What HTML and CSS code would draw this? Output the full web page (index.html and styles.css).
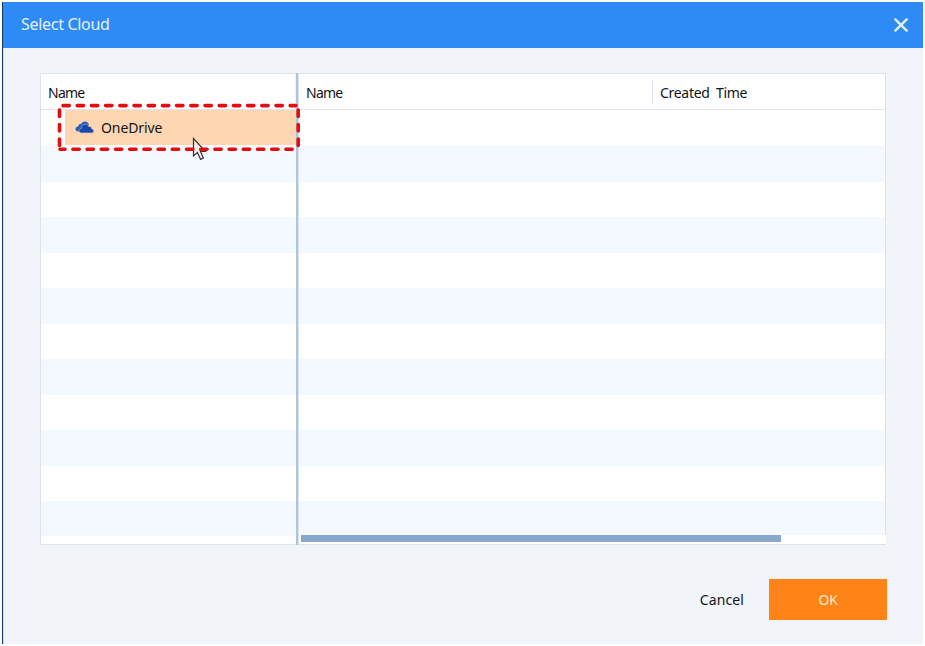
FILE: index.html
```
<!DOCTYPE html>
<html lang="en">

<head>
    <meta charset="UTF-8">
    <meta name="viewport" content="width=device-width, initial-scale=1.0">
    <title>Select Cloud</title>
    <link rel="stylesheet" href="styles.css">
</head>

<body>
    <div class="dialog">
        <div class="titlebar">
            <span class="title">Select Cloud</span>
            <button class="closeBtn" aria-label="Close">
                <svg width="16" height="16" viewBox="0 0 16 16">
                    <path d="M2.3 2.3 L13.7 13.7 M13.7 2.3 L2.3 13.7" />
                </svg>
            </button>
        </div>

        <div class="content">
            <div class="browser">
                <div class="pane tree">
                    <div class="head">
                        <span class="col">Name</span>
                    </div>
                    <div class="rows">
                        <div class="row first">
                            <div class="item">
                                <svg class="cloud" width="19" height="13" viewBox="0 0 19 13">
                                    <path class="back" d="M3.4 10.4 C1.4 10.4 0.5 9.4 0.5 8 C0.5 6.6 1.6 5.7 3.1 5.6 C3.3 3.7 4.6 2.7 6.3 2.7 C7.2 1.3 8.5 0.6 10 0.6 C12.1 0.6 13.5 1.9 14 3.8 L8 7 L5 10.4 Z" />
                                    <path class="front" d="M6.6 11.9 C5 11.9 4.1 11.1 4.1 9.8 C4.1 8.6 5 7.7 6.3 7.5 C6.5 4.9 8.1 3.2 10.3 3.2 C12 3.2 13.3 4.1 13.9 5.6 C15.6 5.3 16.7 6.4 16.8 8 C18.1 8.3 18.7 9.1 18.7 10.1 C18.7 11.2 17.9 11.9 16.8 11.9 Z" />
                                </svg>
                                <span class="label">OneDrive</span>
                            </div>
                        </div>
                        <div class="row"></div>
                        <div class="row"></div>
                        <div class="row"></div>
                        <div class="row"></div>
                        <div class="row"></div>
                        <div class="row"></div>
                        <div class="row"></div>
                        <div class="row"></div>
                        <div class="row"></div>
                        <div class="row"></div>
                        <div class="row"></div>
                    </div>
                </div>
                <div class="splitter"></div>
                <div class="pane files">
                    <div class="head">
                        <span class="col name">Name</span>
                        <span class="col created">Created Time</span>
                    </div>
                    <div class="rows">
                        <div class="row first"></div>
                        <div class="row"></div>
                        <div class="row"></div>
                        <div class="row"></div>
                        <div class="row"></div>
                        <div class="row"></div>
                        <div class="row"></div>
                        <div class="row"></div>
                        <div class="row"></div>
                        <div class="row"></div>
                        <div class="row"></div>
                        <div class="row"></div>
                    </div>
                    <div class="scroll">
                        <div class="thumb"></div>
                    </div>
                </div>

                <!-- mouse pointer -->
                <svg class="cursor" width="16" height="25" viewBox="0 0 16 25">
                    <path d="M1.5 1.5 V19 L5.4 15.5 L8.6 22.4 L11.4 21 L8.4 14.3 H13.4 Z" />
                </svg>

                <!-- dashed highlight around the selected drive -->
                <svg class="highlight" width="246" height="52" viewBox="0 0 246 52">
                    <path d="M9 5.6 H242" stroke-dasharray="6.3 7.9" />
                    <path d="M6 49.2 H242" stroke-dasharray="6.3 7.9" stroke-dashoffset="1.3" />
                    <path d="M5.5 10 V47" stroke-dasharray="6.4 8.1" />
                    <path d="M244.2 10 V47" stroke-dasharray="6.4 8.1" />
                </svg>
            </div>

            <div class="actions">
                <button class="cancelBtn">Cancel</button>
                <button class="okBtn">OK</button>
            </div>
        </div>
    </div>
</body>

</html>
```
FILE: styles.css
```
* {
    margin: 0;
    padding: 0;
    box-sizing: border-box;
}

body {
    width: 925px;
    height: 646px;
    padding: 2px;
    overflow: hidden;
    background-color: #ffffff;
    font-family: "Noto Sans", "Open Sans", sans-serif;
    font-size: 14px;
    color: #111318;
}

button {
    border: none;
    background: none;
    font: inherit;
    color: inherit;
    cursor: pointer;
}

.dialog {
    display: flex;
    flex-direction: column;
    height: 642px;
    background-color: #f1f5fa;
    border-left: 1px solid #153a63;
}

.titlebar {
    display: flex;
    flex: 0 0 46px;
    align-items: center;
    justify-content: space-between;
    padding: 0 14px 0 18px;
    background-color: #2e8af5;
}

.title {
    color: #e4f1ff;
    font-size: 16px;
    letter-spacing: -0.3px;
    line-height: 20px;
    padding-bottom: 2px;
}

.closeBtn {
    width: 16px;
    height: 16px;
}

.closeBtn svg {
    display: block;
    fill: none;
    stroke: #e3f0ff;
    stroke-width: 2.4;
    stroke-linecap: round;
}

.content {
    flex: 1;
    padding: 25px 36px 0;
    border-left: 1px solid #c5dcf0;
}

.browser {
    position: relative;
    display: flex;
    width: 846px;
    height: 472px;
    border: 1px solid #dae2ec;
    border-right: none;
    background-color: #ffffff;
}

.pane {
    display: flex;
    flex-direction: column;
}

.tree {
    flex: 0 0 255px;
}

.files {
    flex: 1;
}

.splitter {
    flex: 0 0 3px;
    margin: -1px 0;
    background-color: #afc4df;
    border-right: 1px solid #dbe5f1;
}

.head {
    display: flex;
    flex: 0 0 36px;
    align-items: center;
    border-bottom: 1px solid #dde4ee;
}

.files .head,
.files .rows {
    border-right: 1px solid #dae2ec;
}

.col {
    padding: 1px 0 0 7px;
    line-height: 23px;
    letter-spacing: -0.75px;
}

.tree .head {
    border-right: 1px solid #eef2f8;
}

.name {
    flex: 0 0 353px;
}

.created {
    border-left: 1px solid #dde3ee;
    padding-left: 7px;
    letter-spacing: -0.3px;
    word-spacing: 3px;
}

.rows {
    display: flex;
    flex-direction: column;
    flex: 0 0 426px;
}

.files .rows {
    flex-basis: 425px;
}

.row {
    flex: 0 0 35.5px;
}

.row:last-child {
    flex: 1;
}

.row.first {
    flex: 0 0 36px;
}

.row:nth-child(even) {
    background-color: #f3f9fe;
}

.item {
    display: flex;
    align-items: center;
    height: 35px;
    margin-left: 24px;
    padding-left: 10px;
    background-color: #fed6b2;
}

.cloud {
    margin-right: 7px;
}

.cloud .back {
    fill: #2b5cb8;
}

.cloud .front {
    fill: #174aa8;
    stroke: #c9b9b8;
    stroke-width: 0.6;
}

.label {
    letter-spacing: -0.1px;
    line-height: 20px;
    padding-top: 1px;
}

.thumb {
    width: 480px;
    height: 7px;
    margin-left: 2px;
    background-color: #89a6cb;
}

.highlight {
    position: absolute;
    left: 13px;
    top: 26px;
    fill: none;
    stroke: #e50c10;
    stroke-width: 3.6;
    stroke-linecap: round;
}

.cursor {
    position: absolute;
    left: 151px;
    top: 63px;
    fill: #fdebdc;
    fill-opacity: 0.75;
    stroke: #30333d;
    stroke-width: 1.2;
}

.actions {
    display: flex;
    justify-content: flex-end;
    align-items: center;
    width: 847px;
    margin-top: 34px;
}

.cancelBtn {
    margin-right: 25px;
    letter-spacing: 0.1px;
}

.okBtn {
    width: 118px;
    height: 41px;
    background-color: #ff8417;
    color: #ffe9d2;
    letter-spacing: -0.4px;
}
```
